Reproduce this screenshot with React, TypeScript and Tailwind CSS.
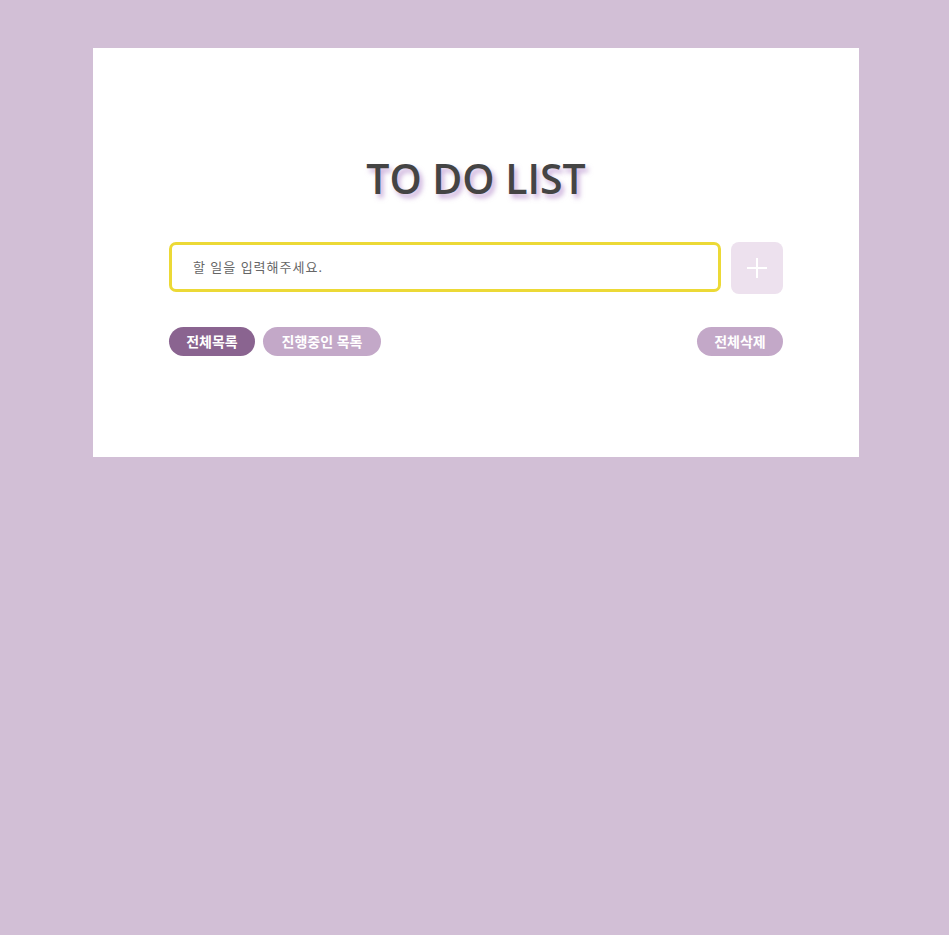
export default function App() {
  return (
    <div className="min-h-[935px] w-full bg-[#d2bfd6] pt-12" style={{ fontFamily: '"Noto Sans", "Noto Sans CJK KR", sans-serif' }}>
      <div className="ml-[93px] h-[409px] w-[766px] bg-white px-[76px] pt-[104px]">
        <h1
          className="text-center text-[41px] font-semibold leading-[52px] text-[#444444] [text-shadow:3px_4px_5px_rgba(160,110,190,0.55)]"
          style={{ fontFamily: '"Open Sans", "Noto Sans", sans-serif' }}
        >
          TO DO LIST
        </h1>
        <div className="mt-[38px] flex gap-[10px]">
          <input
            className="h-[50px] flex-1 rounded-[7px] border-[3px] border-[#ecd936] px-[21px] text-[13px] tracking-[1px] text-[#555] outline-none placeholder:text-[#666]"
            placeholder="할 일을 입력해주세요."
          />
          <button className="flex h-[52px] w-[52px] items-center justify-center rounded-[8px] bg-[#ede1ee]">
            <svg width="22" height="22" viewBox="0 0 22 22" stroke="white" strokeWidth="2">
              <path d="M11 1v20M1 11h20" />
            </svg>
          </button>
        </div>
        <div className="mt-[33px] flex items-center gap-2">
          <button className="h-[29px] w-[86px] rounded-full bg-[#8a6490] text-[14px] font-bold text-white">전체목록</button>
          <button className="h-[29px] w-[118px] rounded-full bg-[#c3a8c8] text-[14px] font-bold text-white">진행중인 목록</button>
          <button className="ml-auto h-[29px] w-[86px] rounded-full bg-[#c3a8c8] text-[14px] font-bold text-white">전체삭제</button>
        </div>
      </div>
    </div>
  );
}
